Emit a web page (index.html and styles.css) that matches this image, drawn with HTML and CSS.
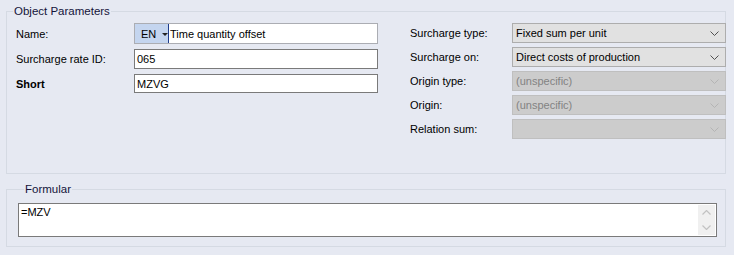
FILE: index.html
```html
<!DOCTYPE html>
<html lang="en">

<head>
  <meta charset="UTF-8">
  <title>Surcharge rate</title>
  <link rel="stylesheet" href="styles.css">
</head>

<body>
  <div class="pagina">

    <fieldset class="grupo grupo-parametros">
      <legend>Object Parameters</legend>
      <div class="colunas">

        <div class="coluna coluna-esquerda">
          <div class="linha linha-nome">
            <span class="rotulo">Name:</span>
            <div class="campo campo-nome">
              <span class="idioma">EN <span class="seta-idioma"></span></span>
              <span class="cursor"></span>
              <span class="valor">Time quantity offset</span>
            </div>
          </div>
          <div class="linha linha-id">
            <span class="rotulo">Surcharge rate ID:</span>
            <div class="campo"><span class="valor">065</span></div>
          </div>
          <div class="linha linha-short">
            <span class="rotulo rotulo-negrito">Short</span>
            <div class="campo"><span class="valor">MZVG</span></div>
          </div>
        </div>

        <div class="coluna coluna-direita">
          <div class="linha">
            <span class="rotulo">Surcharge type:</span>
            <div class="lista">
              <span class="valor">Fixed sum per unit</span>
              <svg class="seta" width="9" height="5" viewBox="0 0 9 5"><path d="M0.5 0.5 L4.5 4.5 L8.5 0.5" fill="none" stroke="currentColor" stroke-width="1"/></svg>
            </div>
          </div>
          <div class="linha">
            <span class="rotulo">Surcharge on:</span>
            <div class="lista">
              <span class="valor">Direct costs of production</span>
              <svg class="seta" width="9" height="5" viewBox="0 0 9 5"><path d="M0.5 0.5 L4.5 4.5 L8.5 0.5" fill="none" stroke="currentColor" stroke-width="1"/></svg>
            </div>
          </div>
          <div class="linha">
            <span class="rotulo">Origin type:</span>
            <div class="lista desativada">
              <span class="valor">(unspecific)</span>
              <svg class="seta" width="9" height="5" viewBox="0 0 9 5"><path d="M0.5 0.5 L4.5 4.5 L8.5 0.5" fill="none" stroke="currentColor" stroke-width="1"/></svg>
            </div>
          </div>
          <div class="linha">
            <span class="rotulo">Origin:</span>
            <div class="lista desativada">
              <span class="valor">(unspecific)</span>
              <svg class="seta" width="9" height="5" viewBox="0 0 9 5"><path d="M0.5 0.5 L4.5 4.5 L8.5 0.5" fill="none" stroke="currentColor" stroke-width="1"/></svg>
            </div>
          </div>
          <div class="linha">
            <span class="rotulo">Relation sum:</span>
            <div class="lista desativada">
              <span class="valor"></span>
              <svg class="seta" width="9" height="5" viewBox="0 0 9 5"><path d="M0.5 0.5 L4.5 4.5 L8.5 0.5" fill="none" stroke="currentColor" stroke-width="1"/></svg>
            </div>
          </div>
        </div>

      </div>
    </fieldset>

    <fieldset class="grupo grupo-formula">
      <legend>Formular</legend>
      <div class="area-texto">
        <div class="texto-formula">=MZV</div>
        <div class="barra-rolagem">
          <svg width="9" height="5" viewBox="0 0 9 5"><path d="M0.5 4.5 L4.5 0.5 L8.5 4.5" fill="none" stroke="currentColor" stroke-width="1.2"/></svg>
          <svg width="9" height="5" viewBox="0 0 9 5"><path d="M0.5 0.5 L4.5 4.5 L8.5 0.5" fill="none" stroke="currentColor" stroke-width="1.2"/></svg>
        </div>
      </div>
    </fieldset>

  </div>
</body>

</html>
```

FILE: styles.css
```css
body {
  box-sizing: border-box;
  font-family: "Liberation Sans", Arial, sans-serif;
  font-size: 11px;
  color: #000;
  background-color: #e6e9f2;
  padding: 0px;
  margin: 0px;
}

.pagina {
  padding: 4px 8px 0px 6px;
}

.grupo {
  margin: 0px;
  padding: 0px;
  border: solid 1px #d5dae3;
  min-inline-size: 0;
}

.grupo legend {
  margin-left: 6px;
  padding: 0px 1px;
  line-height: 14px;
  font-size: 11.5px;
  color: #14143a;
}

.grupo-parametros {
  height: 170px;
  box-sizing: border-box;
}

.colunas {
  display: flex;
  padding-top: 5px;
  padding-left: 9px;
}

.coluna {
  display: flex;
  flex-direction: column;
}

.coluna-esquerda {
  width: 362px;
}

.coluna-direita {
  margin-left: 32px;
  flex: 1;
  gap: 4px;
  margin-right: -1px;
}

.linha {
  display: flex;
  align-items: center;
  height: 20px;
}

.linha-nome {
  height: 21px;
}

.linha-id {
  margin-top: 5px;
}

.linha-short {
  margin-top: 5px;
  height: 19px;
}

.coluna-esquerda .rotulo {
  width: 118px;
}

.coluna-direita .rotulo {
  width: 102px;
}

.rotulo-negrito {
  font-weight: bold;
}

.campo {
  display: flex;
  align-items: center;
  width: 244px;
  height: 100%;
  box-sizing: border-box;
  background-color: white;
  border: solid 1px #7a7a7a;
  padding-left: 2px;
}

.campo-nome {
  padding-left: 0px;
  border-color: #abadb3;
}

.idioma {
  display: flex;
  align-items: center;
  height: 100%;
  width: 33px;
  box-sizing: border-box;
  padding-left: 6px;
  background-color: #c4d5ef;
}

.seta-idioma {
  display: inline-block;
  margin-left: 6px;
  margin-top: 1px;
  border-left: solid 3px transparent;
  border-right: solid 3px transparent;
  border-top: solid 3px #222;
}

.cursor {
  width: 1px;
  height: 100%;
  background-color: #1e3c8c;
  margin-right: 1px;
}

.lista {
  display: flex;
  align-items: center;
  justify-content: space-between;
  flex: 1;
  height: 100%;
  box-sizing: border-box;
  padding: 0px 6px 0px 3px;
  background-color: #e1e1e1;
  border: solid 1px #adadad;
  color: #000;
}

.lista .seta {
  color: #505050;
}

.desativada {
  background-color: #cccccc;
  border-color: #bfbfbf;
  color: #838383;
}

.desativada .seta {
  color: #b4b4b4;
}

.grupo-formula {
  margin-top: 8px;
  padding: 7px 8px 9px 11px;
}

.area-texto {
  display: flex;
  justify-content: space-between;
  height: 34px;
  box-sizing: border-box;
  background-color: white;
  border: solid 1px #7a7a7a;
}

.texto-formula {
  padding: 2px 0px 0px 2px;
  line-height: 13px;
}

.barra-rolagem {
  display: flex;
  flex-direction: column;
  justify-content: space-around;
  align-items: center;
  width: 17px;
  margin: 1px 1px 1px 0px;
  background-color: #f0f0f0;
  color: #c2c2c2;
}
```
